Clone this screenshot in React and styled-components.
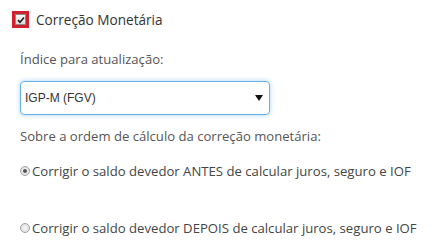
import React from 'react';
import styled, { createGlobalStyle } from 'styled-components';

const GlobalStyle = createGlobalStyle`
  html, body {
    margin: 0;
    padding: 0;
    background: #fff;
  }
  body {
    font-family: "Open Sans", "Noto Sans", sans-serif;
    color: #444;
  }
`;

const Page = styled.div`
  width: 437px;
  height: 252px;
  padding: 11px 0 0 12px;
  box-sizing: border-box;
  overflow: hidden;
`;

const Heading = styled.label`
  display: flex;
  align-items: center;
  gap: 7px;
  font-size: 13.6px;
  color: #333;
  height: 17px;
`;

const CheckFrame = styled.span`
  width: 17px;
  height: 17px;
  box-sizing: border-box;
  border: 3px solid #d21f2e;
  display: flex;
  align-items: center;
  justify-content: center;
`;

const CheckBox = styled.span`
  width: 11px;
  height: 11px;
  box-sizing: border-box;
  border: 1px solid #8a8a8a;
  background: linear-gradient(#f6f6f6, #dedede);
  display: flex;
  align-items: center;
  justify-content: center;
`;

const Body = styled.div`
  padding-left: 8px;
  display: flex;
  flex-direction: column;
`;

const Label = styled.div`
  font-size: 13.1px;
  color: #555;
  margin-top: ${(p) => p.$top}px;
  line-height: 18px;
`;

const SelectBox = styled.div`
  margin-top: ${(p) => p.$top}px;
  width: 250px;
  height: 34px;
  box-sizing: border-box;
  border: 1px solid #66afe9;
  border-radius: 4px;
  box-shadow: 0 0 5px rgba(102, 175, 233, 0.55);
  display: flex;
  align-items: center;
  justify-content: space-between;
  padding: 0 6px 0 4px;
  font-family: "Liberation Sans", Arial, sans-serif;
  font-size: 12px;
  color: #333;
`;

const Radio = styled.label`
  display: flex;
  align-items: center;
  margin-top: ${(p) => p.$top}px;
  font-size: 13.15px;
  color: #444;
  line-height: 18px;
`;

const RadioDot = styled.span`
  width: 10px;
  height: 10px;
  border-radius: 50%;
  box-sizing: border-box;
  border: 1px solid #a0a0a0;
  background: radial-gradient(circle, #f6f6f6, #dadada);
  display: flex;
  align-items: center;
  justify-content: center;
  margin-right: 2px;
  &::after {
    content: '';
    width: 4px;
    height: 4px;
    border-radius: 50%;
    background: ${(p) => (p.$checked ? '#555' : 'transparent')};
  }
`;

export default function App() {
  return (
    <Page>
      <GlobalStyle />
      <Heading>
        <CheckFrame>
          <CheckBox>
            <svg width="8" height="8" viewBox="0 0 8 8">
              <path d="M1 4.2 L3 6.2 L7 1.5" fill="none" stroke="#222" strokeWidth="1.7" />
            </svg>
          </CheckBox>
        </CheckFrame>
        Correção Monetária
      </Heading>
      <Body>
        <Label $top={22}>Índice para atualização:</Label>
        <SelectBox $top={13}>
          <span>IGP-M (FGV)</span>
          <svg width="8" height="6" viewBox="0 0 8 6">
            <path d="M0 0 H8 L4 6 Z" fill="#111" />
          </svg>
        </SelectBox>
        <Label $top={12}>Sobre a ordem de cálculo da correção monetária:</Label>
        <Radio $top={17}>
          <RadioDot $checked />
          Corrigir o saldo devedor ANTES de calcular juros, seguro e IOF
        </Radio>
        <Radio $top={39}>
          <RadioDot />
          Corrigir o saldo devedor DEPOIS de calcular juros, seguro e IOF
        </Radio>
      </Body>
    </Page>
  );
}
